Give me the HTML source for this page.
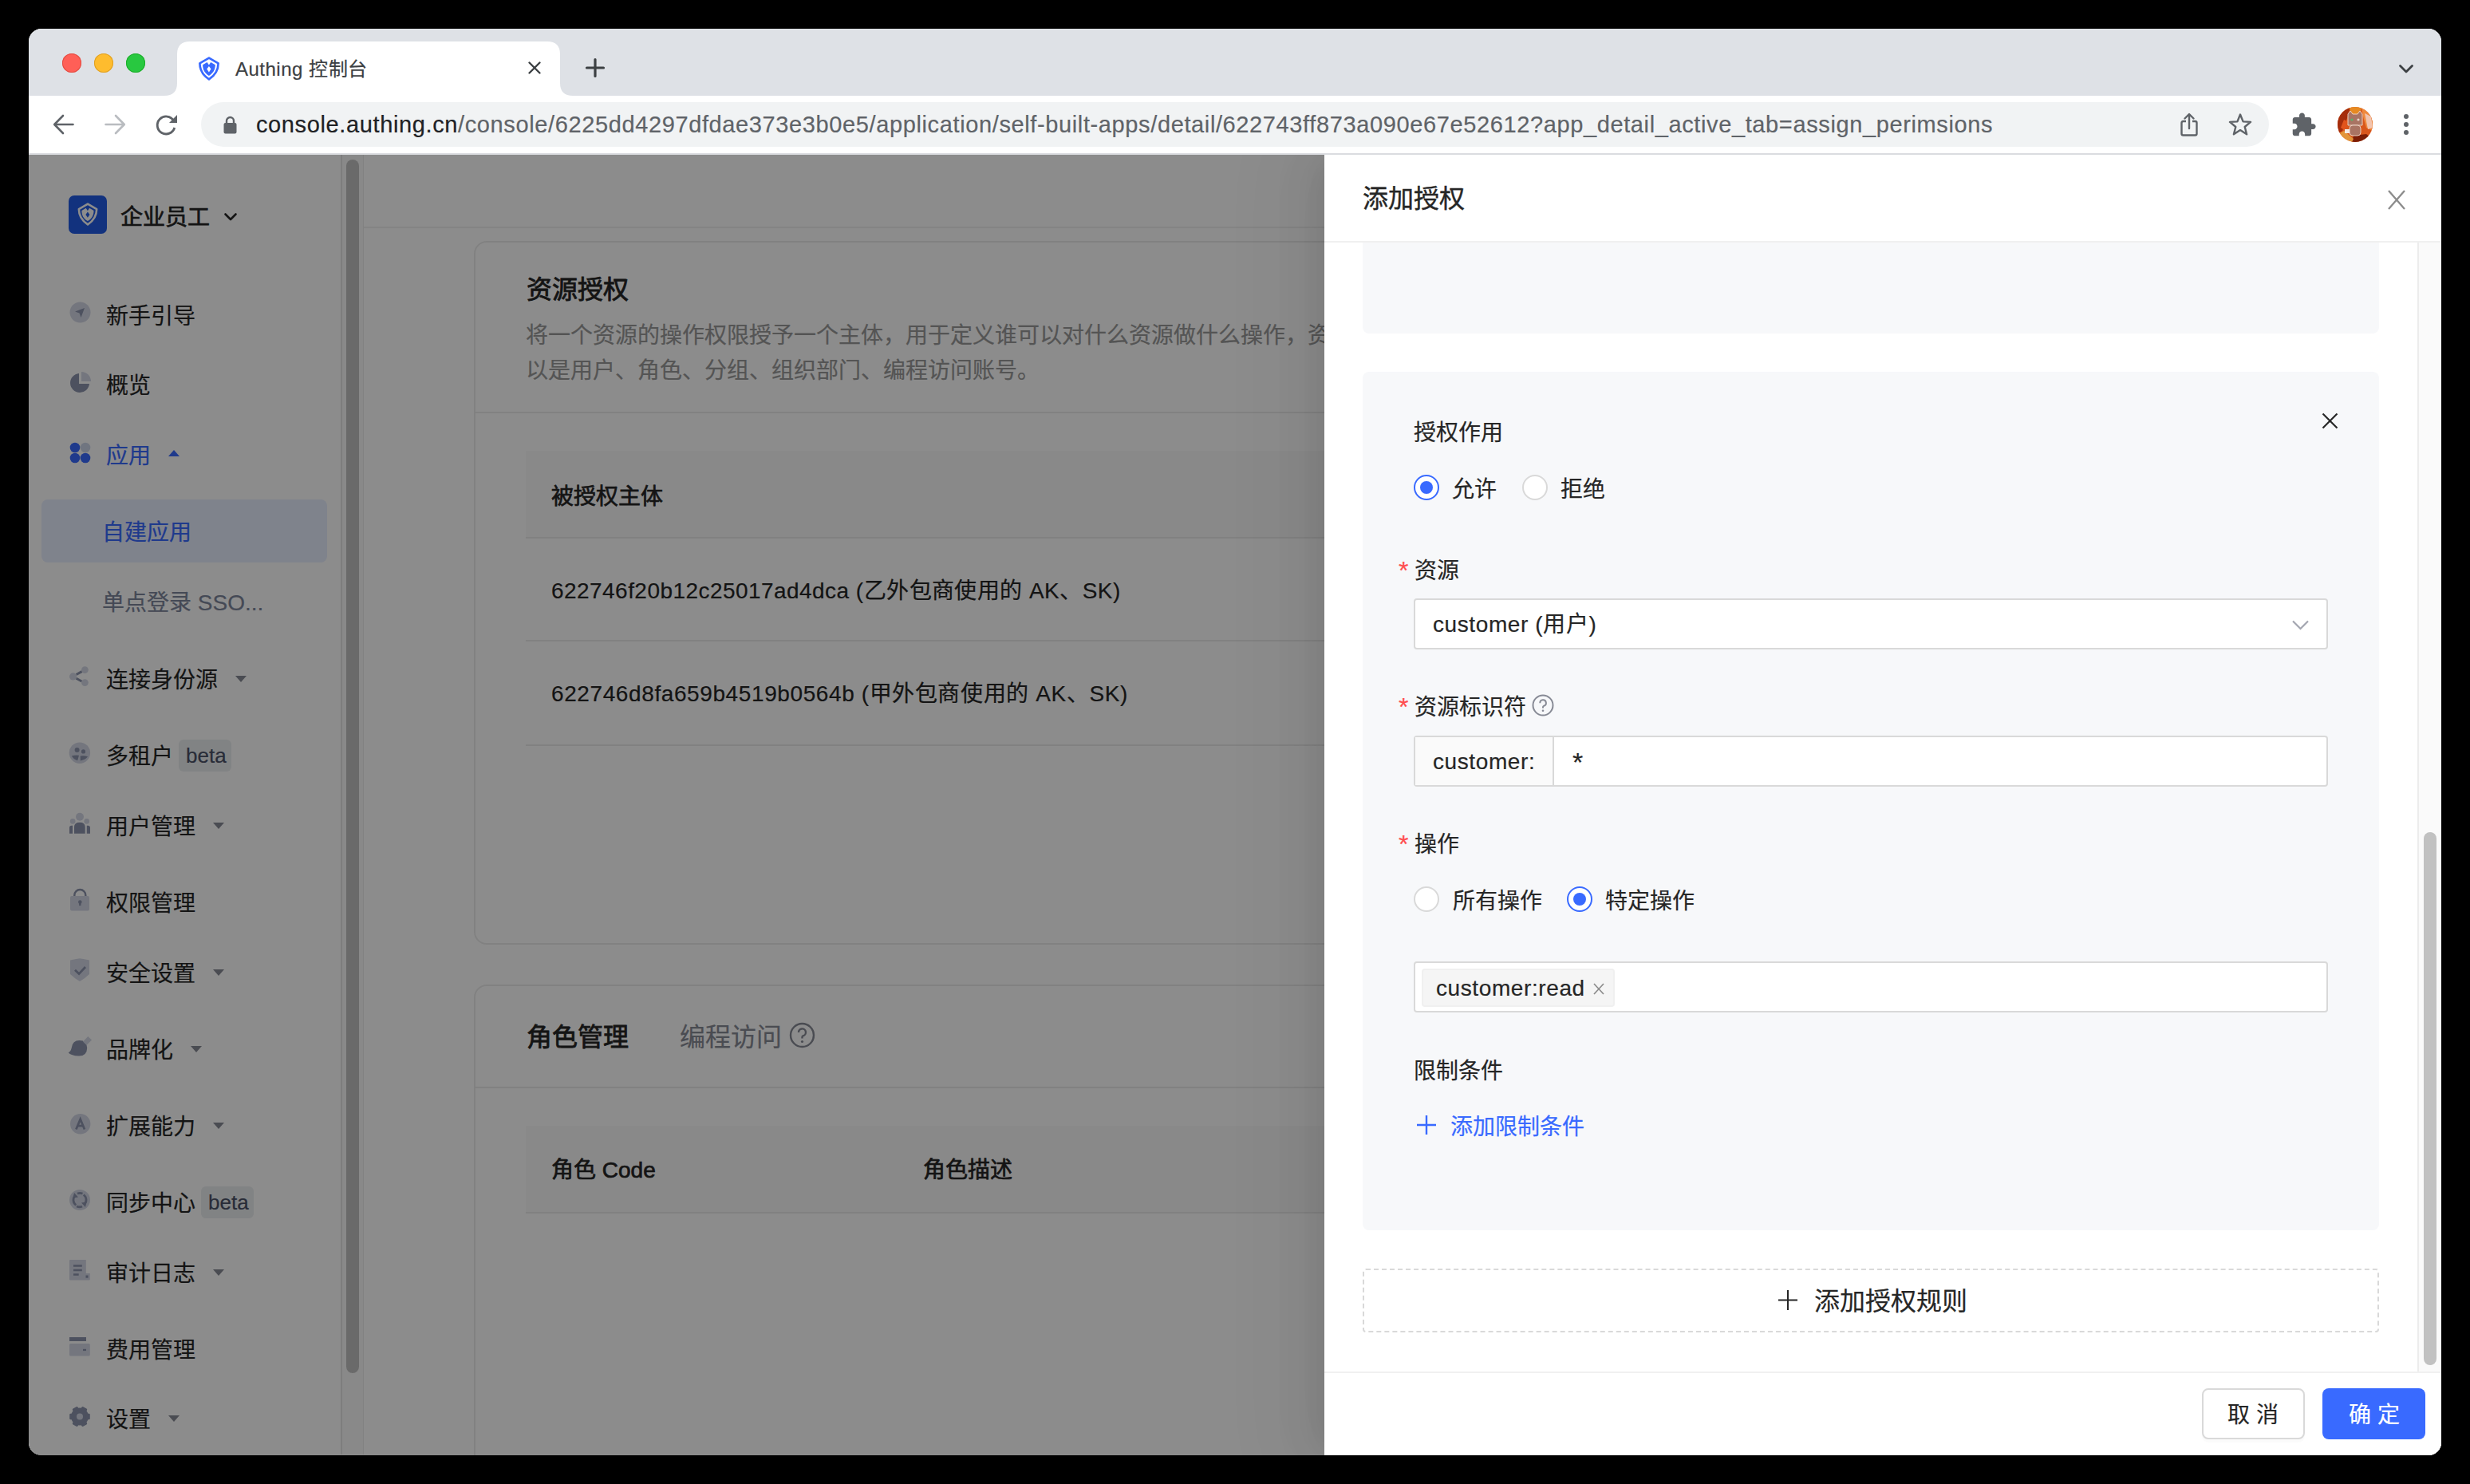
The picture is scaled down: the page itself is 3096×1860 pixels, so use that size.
<!DOCTYPE html>
<html lang="zh-CN"><head><meta charset="utf-8">
<style>
*{box-sizing:border-box;margin:0;padding:0}
html,body{width:3096px;height:1860px;overflow:hidden;background:#000}
body{font-family:"Liberation Sans",sans-serif;position:relative}
.a{position:absolute}
.t{position:absolute;white-space:nowrap;-webkit-text-stroke-width:0.2px}
svg{overflow:visible}
</style></head><body>

<div class="a" style="left:36px;top:36px;width:3024px;height:1788px;border-radius:16px;overflow:hidden;background:#fff">
<div class="a" style="left:0px;top:0px;width:3024px;height:84px;background:#dee1e6"></div>
<div class="a" style="left:0px;top:156px;width:3024px;height:2px;background:#dadce0"></div>
</div>
<div class="a" style="left:78px;top:67px;width:24px;height:24px;background:#ff5f57;border-radius:50%;box-shadow:inset 0 0 0 1px #e24b41"></div>
<div class="a" style="left:118px;top:67px;width:24px;height:24px;background:#febc2e;border-radius:50%;box-shadow:inset 0 0 0 1px #dfa023"></div>
<div class="a" style="left:158px;top:67px;width:24px;height:24px;background:#28c840;border-radius:50%;box-shadow:inset 0 0 0 1px #1dad2b"></div>
<svg class="a" style="left:206px;top:52px;" width="512" height="68" viewBox="0 0 512 68"><path d="M0 68 Q16 68 16 52 L16 16 Q16 0 32 0 L480 0 Q496 0 496 16 L496 52 Q496 68 512 68 Z" fill="#fff"/></svg>
<svg class="a" style="left:248px;top:70px;" width="28" height="32" viewBox="0 0 28 32"><path d="M14 2.6 L25.6 9.3 C25.6 18.5 21.5 24.5 14 29.4 C6.5 24.5 2.4 18.5 2.4 9.3 Z" fill="none" stroke="#396aff" stroke-width="2.7" stroke-linejoin="round"/><path fill-rule="evenodd" d="M6.1 11.2 L11.6 7.9 L13.9 11.6 L16.2 7.9 L21.8 11.2 C21.8 17.5 19.2 21.6 13.9 24.9 C8.6 21.6 6.1 17.5 6.1 11.2 Z M13.9 12.9 L16.5 16.6 L13.9 20.5 L11.3 16.6 Z" fill="#396aff"/></svg>
<div class="t" style="left:295px;top:70.1px;font-size:24px;line-height:34px;color:#3c4043;font-weight:400;letter-spacing:0.5px">Authing 控制台</div>
<svg class="a" style="left:662px;top:77px;" width="16" height="16" viewBox="0 0 16 16"><path d="M1.5 1.5 L14.5 14.5 M14.5 1.5 L1.5 14.5" stroke="#3c4043" stroke-width="2.4" stroke-linecap="round"/></svg>
<svg class="a" style="left:734px;top:73px;" width="24" height="24" viewBox="0 0 24 24"><path d="M12 1.5 V22.5 M1.5 12 H22.5" stroke="#3c4043" stroke-width="3.2" stroke-linecap="round"/></svg>
<svg class="a" style="left:3007px;top:81px;" width="18" height="11" viewBox="0 0 18 11"><path d="M1.5 1.5 L9 9 L16.5 1.5" stroke="#3c4043" stroke-width="2.8" fill="none" stroke-linecap="round" stroke-linejoin="round"/></svg>
<svg class="a" style="left:66px;top:143px;" width="27" height="26" viewBox="0 0 27 26"><path d="M25.5 13 H3 M13 2 L2.2 13 L13 24" stroke="#5f6368" stroke-width="2.6" fill="none" stroke-linecap="round" stroke-linejoin="round"/></svg>
<svg class="a" style="left:131px;top:143px;" width="27" height="26" viewBox="0 0 27 26"><path d="M1.5 13 H24 M14 2 L24.8 13 L14 24" stroke="#b9bcc0" stroke-width="2.6" fill="none" stroke-linecap="round" stroke-linejoin="round"/></svg>
<svg class="a" style="left:195px;top:143px;" width="28" height="27" viewBox="0 0 28 27"><path d="M22.6 8.2 A11 11 0 1 0 23.8 17" stroke="#5f6368" stroke-width="2.8" fill="none"/><path d="M27 1 L27 11 L17 11 Z" fill="#5f6368"/></svg>
<div class="a" style="left:252px;top:128px;width:2592px;height:56px;background:#f1f3f4;border-radius:28px"></div>
<svg class="a" style="left:280px;top:145px;" width="17" height="23" viewBox="0 0 17 23"><path d="M4 9 V6.5 A4.5 4.5 0 0 1 13 6.5 V9" stroke="#5f6368" stroke-width="2.4" fill="none"/><rect x="0.5" y="9" width="16" height="13.5" rx="2" fill="#5f6368"/></svg>
<div class="t" style="left:321px;top:135.5px;font-size:29px;line-height:40px;color:#5f6368;letter-spacing:0.62px"><span style="color:#202124">console.authing.cn</span>/console/6225dd4297dfdae373e3b0e5/application/self-built-apps/detail/622743ff873a090e67e52612?app_detail_active_tab=assign_perimsions</div>
<svg class="a" style="left:2733px;top:141px;" width="22" height="30" viewBox="0 0 22 30"><path d="M7 11 H3.5 Q1.5 11 1.5 13 V26.5 Q1.5 28.5 3.5 28.5 H18.5 Q20.5 28.5 20.5 26.5 V13 Q20.5 11 18.5 11 H15" stroke="#5f6368" stroke-width="2.4" fill="none"/><path d="M11 20 V2.5 M5.5 7.5 L11 2 L16.5 7.5" stroke="#5f6368" stroke-width="2.4" fill="none" stroke-linecap="round" stroke-linejoin="round"/></svg>
<svg class="a" style="left:2793px;top:141px;" width="30" height="30" viewBox="0 0 30 30"><path d="M15 2.5 L18.6 11.4 L28 11.9 L20.7 18 L23.1 27.3 L15 22.1 L6.9 27.3 L9.3 18 L2 11.9 L11.4 11.4 Z" stroke="#5f6368" stroke-width="2.4" fill="none" stroke-linejoin="round"/></svg>
<svg class="a" style="left:2871px;top:139.6px;" width="33" height="33" viewBox="0 0 24 24"><path d="M20.5 11H19V7c0-1.1-.9-2-2-2h-4V3.5C13 2.12 11.88 1 10.5 1S8 2.12 8 3.5V5H4c-1.1 0-1.99.9-1.99 2v3.8H3.5c1.49 0 2.7 1.21 2.7 2.7s-1.21 2.7-2.7 2.7H2V20c0 1.1.9 2 2 2h3.8v-1.5c0-1.490 1.21-2.7 2.7-2.7 1.49 0 2.7 1.21 2.7 2.7V22H17c1.1 0 2-.9 2-2v-4h1.5c1.38 0 2.5-1.12 2.5-2.5S21.88 11 20.5 11z" fill="#5f6368"/></svg>
<svg class="a" style="left:2930px;top:134px;" width="44" height="44" viewBox="0 0 44 44"><defs><clipPath id="avc"><circle cx="22" cy="22" r="22"/></clipPath></defs>
<g clip-path="url(#avc)">
<rect width="44" height="44" fill="#d8561c"/>
<path d="M0 0 H16 L12 14 L6 30 L0 34 Z" fill="#a52d0c"/>
<path d="M14 0 H30 L28 8 L18 10 Z" fill="#e68a22"/>
<path d="M30 0 H44 V30 L36 26 L32 12 Z" fill="#ef8a3e"/>
<path d="M34 8 L42 12 L44 26 L38 28 Z" fill="#f2c4ae"/>
<path d="M20 36 L36 34 L44 40 V44 H18 Z" fill="#7c1e06"/>
<path d="M0 34 L8 30 L20 40 L18 44 H0 Z" fill="#e2953a"/>
<path d="M8 16 L4 26 L10 30 L12 18 Z" fill="#e2541c"/>
<path d="M13 9 L16 5 L19 9 H25 L28 5 L31 9 V23 H13 Z" fill="#a97463" stroke="#f1d9cc" stroke-width="0.9"/>
<rect x="15" y="23" width="14" height="13" rx="4" fill="#a97463" stroke="#f1d9cc" stroke-width="0.9"/>
<circle cx="18" cy="16" r="1.6" fill="#5ab36a"/><circle cx="26" cy="16" r="1.6" fill="#e9d5c9"/>
<rect x="9" y="28" width="6" height="5" fill="#f3ece8"/>
</g></svg>
<div class="a" style="left:3013px;top:143px;width:6px;height:6px;background:#5f6368;border-radius:50%"></div>
<div class="a" style="left:3013px;top:153px;width:6px;height:6px;background:#5f6368;border-radius:50%"></div>
<div class="a" style="left:3013px;top:163px;width:6px;height:6px;background:#5f6368;border-radius:50%"></div>
<div class="a" style="left:36px;top:194px;width:3024px;height:1630px;overflow:hidden;border-radius:0 0 16px 16px">
<div class="a" style="left:-36px;top:-194px;width:3096px;height:1860px">
<div class="a" style="left:36px;top:194px;width:391px;height:1629px;background:#fff"></div>
<div class="a" style="left:427px;top:194px;width:2px;height:1629px;background:#e6e6e6"></div>
<div class="a" style="left:429px;top:194px;width:26px;height:1629px;background:#fafafa"></div>
<div class="a" style="left:455px;top:194px;width:1px;height:1629px;background:#ececec"></div>
<div class="a" style="left:434px;top:200px;width:16px;height:1521px;background:#c1c1c1;border-radius:8px"></div>
<div class="a" style="left:456px;top:194px;width:2604px;height:1629px;background:#fff"></div>
<div class="a" style="left:456px;top:284px;width:2604px;height:2px;background:#f0f0f0"></div>
<div class="a" style="left:86px;top:245px;width:48px;height:48px;background:#215be5;border-radius:7px"></div>
<svg class="a" style="left:97px;top:254px;" width="26" height="30" viewBox="0.5 1 27 31"><path d="M14 2.6 L25.6 9.3 C25.6 18.5 21.5 24.5 14 29.4 C6.5 24.5 2.4 18.5 2.4 9.3 Z" fill="none" stroke="#fff" stroke-width="2.7" stroke-linejoin="round"/><path fill-rule="evenodd" d="M6.1 11.2 L11.6 7.9 L13.9 11.6 L16.2 7.9 L21.8 11.2 C21.8 17.5 19.2 21.6 13.9 24.9 C8.6 21.6 6.1 17.5 6.1 11.2 Z M13.9 12.9 L16.5 16.6 L13.9 20.5 L11.3 16.6 Z" fill="#fff"/></svg>
<div class="t" style="left:151px;top:252.5px;font-size:28px;line-height:40px;color:#262626;font-weight:400;-webkit-text-stroke:0.70px #262626;">企业员工</div>
<svg class="a" style="left:281px;top:267px;" width="16" height="10" viewBox="0 0 16 10"><path d="M1.5 1.5 L8 8 L14.5 1.5" stroke="#262626" stroke-width="2.6" fill="none" stroke-linecap="round" stroke-linejoin="round"/></svg>
<div class="t" style="left:133px;top:376.5px;font-size:28px;line-height:40px;color:#262626;font-weight:400;">新手引导</div>
<div class="t" style="left:133px;top:463.5px;font-size:28px;line-height:40px;color:#262626;font-weight:400;">概览</div>
<div class="t" style="left:133px;top:551.5px;font-size:28px;line-height:40px;color:#396aff;font-weight:400;">应用</div>
<svg class="a" style="left:211px;top:564px;" width="14" height="8" viewBox="0 0 14 8"><path d="M0 8 L7 0 L14 8 Z" fill="#396aff"/></svg>
<div class="t" style="left:133px;top:832.5px;font-size:28px;line-height:40px;color:#262626;font-weight:400;">连接身份源</div>
<svg class="a" style="left:295px;top:847px;" width="14" height="8" viewBox="0 0 14 8"><path d="M0 0 L7 8 L14 0 Z" fill="#878a95"/></svg>
<div class="t" style="left:133px;top:928.5px;font-size:28px;line-height:40px;color:#262626;font-weight:400;">多租户</div>
<div class="a" style="left:224px;top:927px;width:66px;height:40px;background:#eceef1;border-radius:6px"></div>
<div class="t" style="left:233px;top:928.8px;font-size:26px;line-height:37px;color:#4a5066;font-weight:400;">beta</div>
<div class="t" style="left:133px;top:1016.5px;font-size:28px;line-height:40px;color:#262626;font-weight:400;">用户管理</div>
<svg class="a" style="left:267px;top:1031px;" width="14" height="8" viewBox="0 0 14 8"><path d="M0 0 L7 8 L14 0 Z" fill="#878a95"/></svg>
<div class="t" style="left:133px;top:1112.5px;font-size:28px;line-height:40px;color:#262626;font-weight:400;">权限管理</div>
<div class="t" style="left:133px;top:1200.5px;font-size:28px;line-height:40px;color:#262626;font-weight:400;">安全设置</div>
<svg class="a" style="left:267px;top:1215px;" width="14" height="8" viewBox="0 0 14 8"><path d="M0 0 L7 8 L14 0 Z" fill="#878a95"/></svg>
<div class="t" style="left:133px;top:1296.5px;font-size:28px;line-height:40px;color:#262626;font-weight:400;">品牌化</div>
<svg class="a" style="left:239px;top:1311px;" width="14" height="8" viewBox="0 0 14 8"><path d="M0 0 L7 8 L14 0 Z" fill="#878a95"/></svg>
<div class="t" style="left:133px;top:1392.5px;font-size:28px;line-height:40px;color:#262626;font-weight:400;">扩展能力</div>
<svg class="a" style="left:267px;top:1407px;" width="14" height="8" viewBox="0 0 14 8"><path d="M0 0 L7 8 L14 0 Z" fill="#878a95"/></svg>
<div class="t" style="left:133px;top:1488.5px;font-size:28px;line-height:40px;color:#262626;font-weight:400;">同步中心</div>
<div class="a" style="left:252px;top:1487px;width:66px;height:40px;background:#eceef1;border-radius:6px"></div>
<div class="t" style="left:261px;top:1488.8px;font-size:26px;line-height:37px;color:#4a5066;font-weight:400;">beta</div>
<div class="t" style="left:133px;top:1576.5px;font-size:28px;line-height:40px;color:#262626;font-weight:400;">审计日志</div>
<svg class="a" style="left:267px;top:1591px;" width="14" height="8" viewBox="0 0 14 8"><path d="M0 0 L7 8 L14 0 Z" fill="#878a95"/></svg>
<div class="t" style="left:133px;top:1672.5px;font-size:28px;line-height:40px;color:#262626;font-weight:400;">费用管理</div>
<div class="t" style="left:133px;top:1759.5px;font-size:28px;line-height:40px;color:#262626;font-weight:400;">设置</div>
<svg class="a" style="left:211px;top:1774px;" width="14" height="8" viewBox="0 0 14 8"><path d="M0 0 L7 8 L14 0 Z" fill="#878a95"/></svg>
<svg class="a" style="left:87px;top:378.0px;" width="27" height="27" viewBox="0 0 27 27"><circle cx="13.5" cy="13.5" r="13" fill="#d4d8e6"/><path d="M19 8 L7 12.5 L12.5 14.5 L14.5 20 Z" fill="#8c94ad"/></svg>
<svg class="a" style="left:87px;top:465.5px;" width="27" height="27" viewBox="0 0 27 27"><path d="M12 2 A12 12 0 1 0 25 15 L12 15 Z" fill="#8c94ad"/><path d="M15 0 A12 12 0 0 1 27 12 L15 12 Z" fill="#d4d8e6"/></svg>
<svg class="a" style="left:87px;top:554.0px;" width="27" height="27" viewBox="0 0 27 27"><circle cx="7" cy="7" r="6.3" fill="#396aff"/><circle cx="20" cy="7" r="6.3" fill="#cdd5ea"/><circle cx="7" cy="20" r="6.3" fill="#396aff"/><circle cx="20" cy="20" r="6.3" fill="#396aff"/></svg>
<svg class="a" style="left:86px;top:834px;" width="26" height="27" viewBox="0 0 26 27"><circle cx="5.6" cy="13.9" r="4.6" fill="#d4d8e6"/><circle cx="20.4" cy="5.6" r="4.4" fill="#d4d8e6"/><circle cx="20.4" cy="21.6" r="4.4" fill="#d4d8e6"/><path d="M9.6 11.5 L16.6 7.6 M9.6 16.3 L16.4 20" stroke="#8c94ad" stroke-width="3"/></svg>
<svg class="a" style="left:86px;top:929px;" width="28" height="30" viewBox="0 0 28 30"><circle cx="13.9" cy="14.7" r="13.2" fill="#d4d8e6"/><circle cx="10.6" cy="11.1" r="3" fill="#8c94ad"/><circle cx="18.5" cy="12.9" r="2.6" fill="#8c94ad"/><path d="M3.8 18.6 Q8 17.2 13 17.8 L11.2 24.3 Q6 22.6 3.8 18.6 Z M14.6 18.6 Q19.5 17.6 24 19.3 Q21.5 23.2 14.8 24.4 Z" fill="#8c94ad"/></svg>
<svg class="a" style="left:86px;top:1017px;" width="28" height="29" viewBox="0 0 28 29"><circle cx="14" cy="6.7" r="5" fill="#d4d8e6"/><circle cx="5.2" cy="12.4" r="3.3" fill="#d4d8e6"/><circle cx="22.7" cy="12.4" r="3.3" fill="#d4d8e6"/><path d="M7 27.7 V19.5 Q7 13.7 14 13.7 Q20.7 13.7 20.7 19.5 V27.7 Z" fill="#8c94ad"/><path d="M1 27.7 V20.5 Q1 17.7 3.8 17.7 H5 V27.7 Z M27 27.7 V20.5 Q27 17.7 24.2 17.7 H22.8 V27.7 Z" fill="#8c94ad"/></svg>
<svg class="a" style="left:86px;top:1112px;" width="28" height="30" viewBox="0 0 28 30"><path d="M7.3 11.5 V10 A7 7 0 0 1 21.3 10 V11.5" stroke="#8c94ad" stroke-width="2.4" fill="none"/><rect x="2" y="11" width="24" height="18.5" rx="2" fill="#d4d8e6"/><circle cx="14.3" cy="18.5" r="2.3" fill="#8c94ad"/><rect x="13.1" y="18.5" width="2.4" height="4.6" fill="#8c94ad"/></svg>
<svg class="a" style="left:86px;top:1200px;" width="28" height="31" viewBox="0 0 28 31"><path d="M2 3.4 Q8 2 14 1.2 Q20 2 26 3.4 V21 Q21 26 14 30 Q7 26 2 21 Z" fill="#d4d8e6"/><path d="M8 15.8 L13 20.6 L21 12" stroke="#8c94ad" stroke-width="2.8" fill="none"/></svg>
<svg class="a" style="left:85px;top:1297px;" width="31" height="28" viewBox="0 0 31 28"><path d="M0.7 22.5 Q4 20.5 4.8 16 Q6 7 14.5 7 Q24.2 7 24.2 16.5 Q24 26.5 14 26.5 Q9 26.5 5 25 Q2.5 24 0.7 22.5 Z" fill="#8c94ad"/><path d="M19 8.5 L25.3 2 L30 6.6 L23.5 13 Z" fill="#d4d8e6"/></svg>
<svg class="a" style="left:88px;top:1395.5px;" width="26" height="26" viewBox="0 0 26 26"><circle cx="12.7" cy="12.7" r="12.7" fill="#d4d8e6"/><path d="M7.4 19.5 L12.7 6.8 L18 19.5 M9.3 15.2 H16.1" stroke="#8c94ad" stroke-width="2.8" fill="none"/></svg>
<svg class="a" style="left:87px;top:1491px;" width="26" height="26" viewBox="0 0 26 26"><circle cx="13" cy="13" r="13" fill="#d4d8e6"/><path d="M8.2 19.5 A8 8 0 0 1 7.6 7.2 M17.8 6.5 A8 8 0 0 1 18.4 18.8" stroke="#8c94ad" stroke-width="2.8" fill="none"/><path d="M6 4 L11 9.5 L4.5 10.5 Z M20 22 L15 16.5 L21.5 15.5 Z" fill="#8c94ad"/><path d="M9 21 Q13 22.5 16 21 M10 5 Q13 3.8 16.5 5" stroke="#8c94ad" stroke-width="2.8" fill="none"/></svg>
<svg class="a" style="left:87px;top:1579px;" width="26" height="26" viewBox="0 0 26 26"><path d="M0 1 Q0 0 1 0 H20.8 V17 H25.8 V24.5 Q25.8 25.5 24.8 25.5 H1 Q0 25.5 0 24.5 Z" fill="#d4d8e6"/><path d="M5 7.6 H15.8 M5 13 H15.8 M5 18.5 H11.7" stroke="#8c94ad" stroke-width="2.5"/><rect x="20.5" y="19.5" width="3" height="3.2" fill="#8c94ad"/></svg>
<svg class="a" style="left:87px;top:1676px;" width="26" height="24" viewBox="0 0 26 24"><rect x="0" y="0" width="21" height="5" fill="#8c94ad"/><rect x="0" y="8" width="25.8" height="15.6" rx="1.5" fill="#d4d8e6"/><rect x="17" y="14.8" width="4" height="2.3" fill="#8c94ad"/></svg>
<svg class="a" style="left:86px;top:1762px;" width="28" height="27" viewBox="0 0 28 27"><circle cx="14" cy="13.5" r="11" fill="#8c94ad"/><rect x="10.2" y="-12.8" width="7.6" height="5" rx="1.4" transform="rotate(30 14 13.5) translate(0 13.5)" fill="#8c94ad"/><rect x="10.2" y="-12.8" width="7.6" height="5" rx="1.4" transform="rotate(90 14 13.5) translate(0 13.5)" fill="#8c94ad"/><rect x="10.2" y="-12.8" width="7.6" height="5" rx="1.4" transform="rotate(150 14 13.5) translate(0 13.5)" fill="#8c94ad"/><rect x="10.2" y="-12.8" width="7.6" height="5" rx="1.4" transform="rotate(210 14 13.5) translate(0 13.5)" fill="#8c94ad"/><rect x="10.2" y="-12.8" width="7.6" height="5" rx="1.4" transform="rotate(270 14 13.5) translate(0 13.5)" fill="#8c94ad"/><rect x="10.2" y="-12.8" width="7.6" height="5" rx="1.4" transform="rotate(330 14 13.5) translate(0 13.5)" fill="#8c94ad"/><circle cx="14" cy="13.5" r="4" fill="#d4d8e6"/></svg>
<div class="a" style="left:52px;top:626px;width:358px;height:79px;background:#e8eeff;border-radius:8px"></div>
<div class="t" style="left:128px;top:647.5px;font-size:28px;line-height:40px;color:#396aff;font-weight:400;">自建应用</div>
<div class="t" style="left:128px;top:735.5px;font-size:28px;line-height:40px;color:#7d869c;font-weight:400;">单点登录 SSO...</div>
<div class="a" style="left:594px;top:302px;width:2506px;height:882px;border:2px solid #ececec;border-radius:16px;background:#fff"></div>
<div class="t" style="left:660px;top:339.8px;font-size:32px;line-height:46px;color:#262626;font-weight:400;-webkit-text-stroke:0.80px #262626;">资源授权</div>
<div class="t" style="left:659px;top:400.5px;font-size:28px;line-height:40px;color:#999999;font-weight:400;">将一个资源的操作权限授予一个主体，用于定义谁可以对什么资源做什么操作，资源授权的主体可</div>
<div class="t" style="left:659px;top:444.5px;font-size:28px;line-height:40px;color:#999999;font-weight:400;">以是用户、角色、分组、组织部门、编程访问账号。</div>
<div class="a" style="left:596px;top:516px;width:2504px;height:2px;background:#ececec"></div>
<div class="a" style="left:659px;top:565px;width:2441px;height:110px;background:#fafafa"></div>
<div class="a" style="left:659px;top:673px;width:2441px;height:2px;background:#ececec"></div>
<div class="t" style="left:691px;top:602.5px;font-size:28px;line-height:40px;color:#262626;font-weight:400;-webkit-text-stroke:0.70px #262626;">被授权主体</div>
<div class="t" style="left:691px;top:720.5px;font-size:28px;line-height:40px;color:#262626;font-weight:400;letter-spacing:0.45px">622746f20b12c25017ad4dca (乙外包商使用的 AK、SK)</div>
<div class="a" style="left:659px;top:802px;width:2441px;height:2px;background:#ececec"></div>
<div class="t" style="left:691px;top:850.0px;font-size:28px;line-height:40px;color:#262626;font-weight:400;letter-spacing:0.6px">622746d8fa659b4519b0564b (甲外包商使用的 AK、SK)</div>
<div class="a" style="left:659px;top:933px;width:2441px;height:2px;background:#ececec"></div>
<div class="a" style="left:594px;top:1234px;width:2506px;height:666px;border:2px solid #ececec;border-radius:16px;background:#fff"></div>
<div class="t" style="left:660px;top:1276.8px;font-size:32px;line-height:46px;color:#262626;font-weight:400;-webkit-text-stroke:0.80px #262626;">角色管理</div>
<div class="t" style="left:852px;top:1276.8px;font-size:32px;line-height:46px;color:#878a95;font-weight:400;">编程访问</div>
<svg class="a" style="left:989px;top:1281px;" width="33" height="33" viewBox="0 0 33 33"><circle cx="16.5" cy="16.5" r="14.5" stroke="#878a95" stroke-width="2.4" fill="none"/><path d="M12 13 A4.5 4.5 0 1 1 17.5 17.3 Q16.5 17.8 16.5 19 V20.5" stroke="#878a95" stroke-width="2.4" fill="none"/><circle cx="16.5" cy="24.5" r="1.6" fill="#878a95"/></svg>
<div class="a" style="left:596px;top:1362px;width:2504px;height:2px;background:#ececec"></div>
<div class="a" style="left:659px;top:1411px;width:2441px;height:110px;background:#fafafa"></div>
<div class="a" style="left:659px;top:1519px;width:2441px;height:2px;background:#ececec"></div>
<div class="t" style="left:691px;top:1446.5px;font-size:28px;line-height:40px;color:#262626;font-weight:400;-webkit-text-stroke:0.70px #262626;">角色 Code</div>
<div class="t" style="left:1157px;top:1446.5px;font-size:28px;line-height:40px;color:#262626;font-weight:400;-webkit-text-stroke:0.70px #262626;">角色描述</div>
</div></div>
<div class="a" style="left:36px;top:194px;width:1624px;height:1630px;background:rgba(0,0,0,0.45);border-radius:0 0 0 16px"></div>
<div class="a" style="left:36px;top:194px;width:3024px;height:1630px;overflow:hidden;border-radius:0 0 16px 16px"><div class="a" style="left:-36px;top:-194px;width:3096px;height:1860px">
<div class="a" style="left:1660px;top:194px;width:1400px;height:1630px;background:#fff;overflow:hidden;border-radius:0 0 16px 0;box-shadow:-12px 0 32px -16px rgba(0,0,0,.08),-18px 0 56px 0 rgba(0,0,0,.05),-24px 0 96px 32px rgba(0,0,0,.03)">
<div class="a" style="left:-1660px;top:-194px;width:3096px;height:1860px">
<div class="t" style="left:1708px;top:226.3px;font-size:32px;line-height:46px;color:#262626;font-weight:400;-webkit-text-stroke:0.4px #262626;">添加授权</div>
<svg class="a" style="left:2993px;top:237.5px;" width="22" height="25" viewBox="0 0 22 25"><path d="M1 1 L21 24 M21 1 L1 24" stroke="#8c8c8c" stroke-width="2.3"/></svg>
<div class="a" style="left:1660px;top:302px;width:1400px;height:2px;background:#f0f0f0"></div>
<div class="a" style="left:1660px;top:304px;width:1400px;height:1415px;overflow:hidden">
<div class="a" style="left:-1660px;top:-304px;width:3096px;height:1860px">
<div class="a" style="left:1708px;top:200px;width:1274px;height:218px;background:#f7f8fa;border-radius:8px"></div>
<div class="a" style="left:1708px;top:466px;width:1274px;height:1076px;background:#f7f8fa;border-radius:8px"></div>
<div class="t" style="left:1772px;top:522.5px;font-size:28px;line-height:40px;color:#262626;font-weight:400;">授权作用</div>
<svg class="a" style="left:2910px;top:517px;" width="21" height="21" viewBox="0 0 21 21"><path d="M1.5 1.5 L19.5 19.5 M19.5 1.5 L1.5 19.5" stroke="#262626" stroke-width="2.2"/></svg>
<div class="a" style="left:1772px;top:595px;width:32px;height:32px;border-radius:50%;border:2px solid #396aff;background:#fff"></div>
<div class="a" style="left:1780px;top:603px;width:16px;height:16px;border-radius:50%;background:#396aff"></div>
<div class="t" style="left:1820px;top:593.5px;font-size:28px;line-height:40px;color:#262626;font-weight:400;">允许</div>
<div class="a" style="left:1908px;top:595px;width:32px;height:32px;border-radius:50%;border:2px solid #d9d9d9;background:#fff"></div>
<div class="t" style="left:1956px;top:593.5px;font-size:28px;line-height:40px;color:#262626;font-weight:400;">拒绝</div>
<div class="t" style="left:1753px;top:692.3px;font-size:32px;line-height:46px;color:#ff4d4f;font-weight:400;">*</div>
<div class="t" style="left:1773px;top:695.5px;font-size:28px;line-height:40px;color:#262626;font-weight:400;">资源</div>
<div class="a" style="left:1772px;top:750px;width:1146px;height:64px;background:#fff;border:2px solid #d9d9d9;border-radius:4px"></div>
<div class="t" style="left:1796px;top:763.0px;font-size:28px;line-height:40px;color:#262626;font-weight:400;letter-spacing:0.6px">customer (用户)</div>
<svg class="a" style="left:2873px;top:777px;" width="21" height="13" viewBox="0 0 21 13"><path d="M1 1.5 L10.5 11 L20 1.5" stroke="#a3a6b0" stroke-width="2.2" fill="none"/></svg>
<div class="t" style="left:1753px;top:863.3px;font-size:32px;line-height:46px;color:#ff4d4f;font-weight:400;">*</div>
<div class="t" style="left:1773px;top:866.5px;font-size:28px;line-height:40px;color:#262626;font-weight:400;">资源标识符</div>
<svg class="a" style="left:1920px;top:870px;" width="28" height="28" viewBox="0 0 28 28"><circle cx="14" cy="14" r="12.5" stroke="#878a95" stroke-width="2" fill="none"/><path d="M10.3 11.2 A3.8 3.8 0 1 1 15 14.8 Q14 15.3 14 16.3 V17.5" stroke="#878a95" stroke-width="2" fill="none"/><circle cx="14" cy="20.8" r="1.3" fill="#878a95"/></svg>
<div class="a" style="left:1772px;top:922px;width:1146px;height:64px;background:#fff;border:2px solid #d9d9d9;border-radius:4px"></div>
<div class="a" style="left:1774px;top:924px;width:174px;height:60px;background:#fafafa;border-right:2px solid #d9d9d9"></div>
<div class="t" style="left:1796px;top:935.0px;font-size:28px;line-height:40px;color:#262626;font-weight:400;letter-spacing:0.6px">customer:</div>
<div class="t" style="left:1971px;top:930.5px;font-size:34px;line-height:49px;color:#262626;font-weight:400;">*</div>
<div class="t" style="left:1753px;top:1035.3px;font-size:32px;line-height:46px;color:#ff4d4f;font-weight:400;">*</div>
<div class="t" style="left:1773px;top:1038.5px;font-size:28px;line-height:40px;color:#262626;font-weight:400;">操作</div>
<div class="a" style="left:1772px;top:1111px;width:32px;height:32px;border-radius:50%;border:2px solid #d9d9d9;background:#fff"></div>
<div class="t" style="left:1821px;top:1109.5px;font-size:28px;line-height:40px;color:#262626;font-weight:400;">所有操作</div>
<div class="a" style="left:1964px;top:1111px;width:32px;height:32px;border-radius:50%;border:2px solid #396aff;background:#fff"></div>
<div class="a" style="left:1972px;top:1119px;width:16px;height:16px;border-radius:50%;background:#396aff"></div>
<div class="t" style="left:2012px;top:1109.5px;font-size:28px;line-height:40px;color:#262626;font-weight:400;">特定操作</div>
<div class="a" style="left:1772px;top:1205px;width:1146px;height:64px;background:#fff;border:2px solid #d9d9d9;border-radius:4px"></div>
<div class="a" style="left:1782px;top:1214px;width:242px;height:48px;background:#f5f5f5;border:2px solid #f0f0f0;border-radius:4px"></div>
<div class="t" style="left:1800px;top:1219.0px;font-size:28px;line-height:40px;color:#262626;font-weight:400;letter-spacing:0.6px">customer:read</div>
<svg class="a" style="left:1997px;top:1232px;" width="14" height="15" viewBox="0 0 14 15"><path d="M1 1 L13 14 M13 1 L1 14" stroke="#8c8c8c" stroke-width="1.7"/></svg>
<div class="t" style="left:1772px;top:1322.5px;font-size:28px;line-height:40px;color:#262626;font-weight:400;">限制条件</div>
<svg class="a" style="left:1776px;top:1398px;" width="24" height="24" viewBox="0 0 24 24"><path d="M12 0 V24 M0 12 H24" stroke="#396aff" stroke-width="2.4"/></svg>
<div class="t" style="left:1818px;top:1392.5px;font-size:28px;line-height:40px;color:#396aff;font-weight:400;">添加限制条件</div>
<div class="a" style="left:1708px;top:1590px;width:1274px;height:80px;border:2px dashed #d9d9d9;border-radius:4px;background:#fff"></div>
<svg class="a" style="left:2229px;top:1617px;" width="24" height="25" viewBox="0 0 24 25"><path d="M12 0 V25 M0 12.5 H24" stroke="#262626" stroke-width="2"/></svg>
<div class="t" style="left:2274px;top:1607.8px;font-size:32px;line-height:46px;color:#262626;font-weight:400;">添加授权规则</div>
<div class="a" style="left:3030px;top:303px;width:2px;height:1416px;background:#ececec"></div>
<div class="a" style="left:3032px;top:303px;width:28px;height:1416px;background:#fafafa"></div>
<div class="a" style="left:3038px;top:1043px;width:16px;height:668px;background:#c1c1c1;border-radius:8px"></div>
</div></div>
<div class="a" style="left:1660px;top:1719px;width:1400px;height:2px;background:#f0f0f0"></div>
<div class="a" style="left:2760px;top:1740px;width:129px;height:64px;background:#fff;border:2px solid #d9d9d9;border-radius:8px;box-shadow:0 4px 0 rgba(0,0,0,.015)"></div>
<div class="t" style="left:2792px;top:1753.5px;font-size:28px;line-height:40px;color:#262626;font-weight:400;">取 消</div>
<div class="a" style="left:2911px;top:1740px;width:129px;height:64px;background:#396aff;border-radius:8px"></div>
<div class="t" style="left:2944px;top:1753.5px;font-size:28px;line-height:40px;color:#fff;font-weight:400;">确 定</div>
</div></div>
</div></div>
</body></html>
